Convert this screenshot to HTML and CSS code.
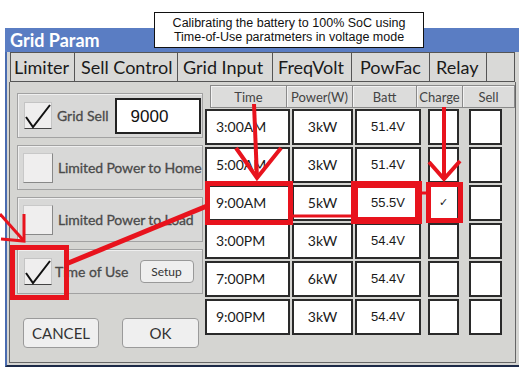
FILE: index.html
```html
<!DOCTYPE html>
<html lang="en">
<head>
<meta charset="utf-8">
<title>Grid Param</title>
<link rel="stylesheet" href="styles.css">
</head>
<body>

	<div class="window">

		<div class="titlebar">Grid Param</div>

		<div class="frame">

			<div class="tabs">
				<div class="tab tab-limiter active">Limiter</div>
				<div class="tab tab-sell">Sell Control</div>
				<div class="tab tab-grid">Grid Input</div>
				<div class="tab tab-freq">FreqVolt</div>
				<div class="tab tab-pow">PowFac</div>
				<div class="tab tab-relay">Relay</div>
				<div class="tab tab-blank"></div>
			</div>

			<div class="panel">

				<!-- left column: options -->
				<div class="options">

					<div class="opt">
						<span class="check">
							<svg width="28" height="27" viewBox="0 0 28 27"><polyline points="2,15 9,25 26,3" /></svg>
						</span>
						<span class="label">Grid Sell</span>
						<span class="field">9000</span>
					</div>

					<div class="opt">
						<span class="check check-wide"></span>
						<span class="label label-long">Limited Power to Home</span>
					</div>

					<div class="opt">
						<span class="check check-wide"></span>
						<span class="label label-long">Limited Power to Load</span>
					</div>

					<div class="opt">
						<span class="check">
							<svg width="28" height="27" viewBox="0 0 28 27"><polyline points="2,15 9,25 26,3" /></svg>
						</span>
						<span class="label label-tou">Time of Use</span>
						<span class="setup">Setup</span>
					</div>

					<div class="buttons">
						<span class="btn btn-cancel">CANCEL</span>
						<span class="btn btn-ok">OK</span>
					</div>

				</div>

				<!-- right column: schedule -->
				<div class="schedule">

					<div class="head">
						<div class="hcell h-time">Time</div>
						<div class="hcell h-power">Power(W)</div>
						<div class="hcell h-batt">Batt</div>
						<div class="hcell h-charge">Charge</div>
						<div class="hcell h-sell">Sell</div>
					</div>

					<div class="rows">
						<div class="cell c-time">3:00AM</div>
						<div class="cell c-power">3kW</div>
						<div class="cell c-batt">51.4V</div>
						<div class="cell c-charge"></div>
						<div class="cell c-sell"></div>

						<div class="cell c-time">5:00AM</div>
						<div class="cell c-power">3kW</div>
						<div class="cell c-batt">51.4V</div>
						<div class="cell c-charge"></div>
						<div class="cell c-sell"></div>

						<div class="cell c-time">9:00AM</div>
						<div class="cell c-power">5kW</div>
						<div class="cell c-batt">55.5V</div>
						<div class="cell c-charge tick">&#10003;</div>
						<div class="cell c-sell"></div>

						<div class="cell c-time">3:00PM</div>
						<div class="cell c-power">3kW</div>
						<div class="cell c-batt">54.4V</div>
						<div class="cell c-charge"></div>
						<div class="cell c-sell"></div>

						<div class="cell c-time">7:00PM</div>
						<div class="cell c-power">6kW</div>
						<div class="cell c-batt">54.4V</div>
						<div class="cell c-charge"></div>
						<div class="cell c-sell"></div>

						<div class="cell c-time">9:00PM</div>
						<div class="cell c-power">3kW</div>
						<div class="cell c-batt">54.4V</div>
						<div class="cell c-charge"></div>
						<div class="cell c-sell"></div>
					</div>

				</div>

			</div>

		</div>

	</div>

	<!-- annotation overlay -->
	<div class="callout">
		Calibrating the battery to 100% SoC using<br>
		Time-of-Use paratmeters in voltage mode
	</div>

	<svg class="marks" width="519" height="367" viewBox="0 0 519 367">
		<!-- boxes -->
		<rect x="207.5" y="183.5" width="83" height="39" />
		<rect x="354.5" y="184.5" width="64" height="36" class="thick" />
		<rect x="428.5" y="184.5" width="32" height="36" />
		<rect x="12.5" y="247.5" width="54" height="50" />
		<!-- connectors -->
		<line x1="293" y1="216" x2="352" y2="216" class="thin" />
		<line x1="421" y1="193" x2="427" y2="193" class="thin" />
		<line x1="66" y1="264" x2="207" y2="206" />
		<!-- arrow to 9:00AM -->
		<line x1="254" y1="104" x2="257" y2="178" class="mid" />
		<polyline points="236,148 257,178 281,148" class="mid" />
		<!-- arrow to charge -->
		<line x1="444" y1="107" x2="444" y2="178" class="mid" />
		<polyline points="429,162 444,179 460,161" class="mid" />
		<!-- arrow to time of use -->
		<line x1="0" y1="214" x2="24" y2="241" class="thin" />
		<polyline points="24,214 24,241 1,239" class="thin" />
	</svg>

</body>
</html>
```

FILE: styles.css
```css
html,body {
	margin:0;
	padding:0;
	}
body {
	width:519px;
	height:367px;
	overflow:hidden;
	position:relative;
	background-color:#fff;
	font-family:Lato,"Open Sans",sans-serif;
	color:#222;
	}

.window {
	margin:28px 0 0 5px;
	}

.titlebar {
	height:24px;
	line-height:25px;
	padding-left:5px;
	background-color:#5a7dc3;
	color:#fff;
	font-weight:bold;
	font-size:18px;
	}

.frame {
	height:313px;
	border-left:2px solid #4a6cb0;
	border-bottom:2px solid #1d2a48;
	background-color:#d5d5d2;
	padding-left:3px;
	}

/* tabs */
.tabs {
	display:flex;
	height:30px;
	}
.tab {
	box-sizing:border-box;
	height:30px;
	line-height:28px;
	padding-left:3px;
	font-size:18px;
	color:#1a1a1a;
	background-color:#d9d9d7;
	border:1px solid #555;
	border-left:none;
	}
.tab-limiter { width:65px; border-left:1px solid #555; }
.tab-sell { width:103px; padding-left:6px; }
.tab-grid { width:95px; padding-left:5px; }
.tab-freq { width:79px; padding-left:5px; }
.tab-pow { width:78px; padding-left:8px; }
.tab-relay { width:57px; padding-left:6px; }
.tab-blank { width:28px; }

/* panel */
.panel {
	display:flex;
	box-sizing:border-box;
	width:507px;
	height:281px;
	margin-left:-1px;
	padding:3px 0 0 7px;
	border:1px solid #666;
	border-top:none;
	}

.options {
	width:186px;
	flex-shrink:0;
	padding-top:8px;
	display:flex;
	flex-direction:column;
	gap:7px;
	}

.opt {
	box-sizing:border-box;
	height:45px;
	display:flex;
	align-items:center;
	padding-left:6px;
	background-color:#d8d8d7;
	border:1px solid #a2a2a2;
	box-shadow:inset 1px 1px 0 #efefef;
	overflow:hidden;
	}

.check {
	box-sizing:border-box;
	flex-shrink:0;
	width:28px;
	height:27px;
	background-color:#efeeee;
	border:1px solid #c4c4c4;
	border-bottom-color:#444;
	}
.check svg {
	display:block;
	margin:-1px 0 0 -1px;
	}
.check polyline {
	fill:none;
	stroke:#111;
	stroke-width:2;
	}
.check-wide {
	width:30px;
	height:30px;
	margin-left:-1px;
	border-color:#c8c8c8;
	border-right-color:#888;
	border-bottom-color:#888;
	}

.label {
	margin-left:5px;
	font-size:14px;
	color:#4a4a4a;
	white-space:nowrap;
	-webkit-text-stroke:0.3px #4a4a4a;
	}
.label-long {
	font-size:14px;
	letter-spacing:-0.1px;
	}
.label-tou {
	margin-left:3px;
	}

.field {
	box-sizing:border-box;
	flex-shrink:0;
	width:86px;
	height:36px;
	margin-left:6px;
	padding-left:14px;
	line-height:34px;
	background-color:#fff;
	border:2px solid #222;
	font-family:"Liberation Sans",Arial,sans-serif;
	font-size:17px;
	color:#111;
	}

.setup {
	box-sizing:border-box;
	flex-shrink:0;
	width:54px;
	height:23px;
	margin-left:11px;
	line-height:21px;
	text-align:center;
	font-size:12px;
	color:#333;
	background-color:#efefef;
	border:1px solid #999;
	border-radius:4px;
	}

.buttons {
	display:flex;
	margin-top:17px;
	padding-left:6px;
	gap:23px;
	}
.btn {
	box-sizing:border-box;
	height:30px;
	line-height:28px;
	text-align:center;
	font-size:15px;
	color:#333;
	background-color:#efefef;
	border:1px solid #9a9a9a;
	border-radius:4px;
	}
.btn-cancel { width:76px; }
.btn-ok { width:77px; }

/* schedule table */
.schedule {
	margin-left:2px;
	}

.head {
	display:flex;
	height:23px;
	margin-left:5px;
	}
.hcell {
	box-sizing:border-box;
	height:23px;
	line-height:22px;
	text-align:center;
	font-size:13px;
	color:#444;
	background-color:#dcdcdb;
	border:1px solid #8a8a8a;
	border-left:none;
	box-shadow:inset 1px 1px 0 #f2f2f2;
	}
.h-time { width:77px; border-left:1px solid #8a8a8a; }
.h-power { width:66px; }
.h-batt { width:64px; }
.h-charge { width:46px; }
.h-sell { width:52px; }

.rows {
	display:grid;
	grid-template-columns:87px 63px 73px 41px 33px;
	grid-auto-rows:36px;
	row-gap:2px;
	margin-top:1px;
	}
.cell {
	box-sizing:border-box;
	height:36px;
	line-height:32px;
	background-color:#fff;
	border:2px solid #2a2a2a;
	font-size:14px;
	color:#1a1a1a;
	}
.c-time { width:85px; padding-left:9px; }
.c-power { width:61px; text-align:center; }
.c-batt {
	width:66px;
	text-align:center;
	font-family:"Liberation Sans",Arial,sans-serif;
	font-size:13px;
	}
.c-charge { width:31px; }
.c-sell { width:33px; }
.tick {
	text-align:center;
	font-family:"DejaVu Sans",sans-serif;
	font-size:11px;
	}

/* annotations over the screenshot */
.callout {
	position:absolute;
	left:154px;
	top:12px;
	box-sizing:border-box;
	width:270px;
	height:36px;
	padding-top:3px;
	text-align:center;
	line-height:14px;
	font-family:"Liberation Sans",Arial,sans-serif;
	font-size:12.5px;
	color:#111;
	background-color:#fff;
	border:1px solid #111;
	}

.marks {
	position:absolute;
	left:0;
	top:0;
	pointer-events:none;
	}
.marks rect, .marks line, .marks polyline {
	fill:none;
	stroke:#e8131d;
	stroke-width:5;
	}
.marks .thick { stroke-width:7; }
.marks .mid { stroke-width:4; }
.marks .thin { stroke-width:3; }
```
